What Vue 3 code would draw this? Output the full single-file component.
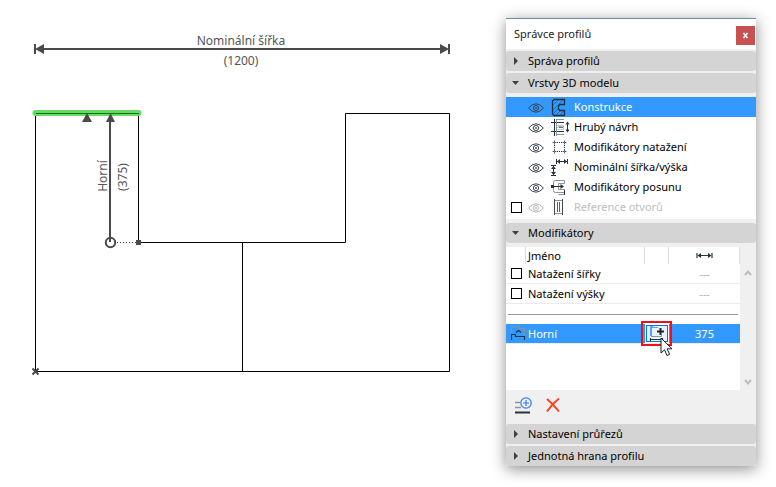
<script setup>
import { ref } from 'vue'

const dark = '#26333b'
const gray = '#8b9299'

const layers = ref([
  {
    name: 'Konstrukce', visible: true, selected: true,
    icon: [
      { d: 'M4 2.5H14.5V7.5H10L8.5 9V12L10 13.5H14.5V18.5H4L2.5 17V4Z', stroke: '#20303e', w: 1.3 },
      { d: 'M3 8L8 3M3 13L13 3M3 17L8.5 11.5M6 18L10 14M10 18L14 14', stroke: '#23527f', w: 0.7 }
    ]
  },
  {
    name: 'Hrubý návrh', visible: true,
    icon: [
      { d: 'M1 5.5H14M1 14.5H14M4.5 2V19', stroke: dark, w: 1 },
      { d: 'M6.5 2V19M7 2.5H14M7 17.5H14', stroke: gray, w: 1 },
      { d: 'M7.5 8.5H13.5V12.5H7.5', stroke: '#c3c8cc', w: 1 },
      { d: 'M8 10.5L9 9.5L10 11L11 9.5L12 11L13 9.5', stroke: dark, w: 0.8 },
      { d: 'M17.5 6V14', stroke: dark, w: 1 },
      { d: 'M15.5 7.5L17.5 4.5L19.5 7.5ZM15.5 12.5L17.5 15.5L19.5 12.5Z', fill: dark }
    ]
  },
  {
    name: 'Modifikátory natažení', visible: true,
    icon: [
      { d: 'M7 5.5H13M7 14.5H13M4.500 8V13M14.500 8V13', stroke: dark, w: 1, dash: '1 1' },
      { d: 'M2.500 5.500H6.500M4.500 3.500V7.500M12.500 5.500H16.500M14.500 3.500V7.500M2.500 14.500H6.500M4.500 12.500V16.500M12.500 14.500H16.500M14.500 12.500V16.500', stroke: '#59646b', w: 1 }
    ]
  },
  {
    name: 'Nominální šířka/výška', visible: true,
    icon: [
      { d: 'M6.5 2V7M17.5 2V7M7 4.5H17M1 8.5H6M1 18.5H6M3.5 9V18', stroke: dark, w: 1 },
      { d: 'M7 4.5L10 2V7ZM17 4.5L14 2V7ZM3.5 9L1 12H6ZM3.5 18L1 15H6Z', fill: dark }
    ]
  },
  {
    name: 'Modifikátory posunu', visible: true,
    icon: [
      { d: 'M14.5 6.500V3.500H5.500Q3.500 3.500 3.500 5.500V13.500Q3.500 15.500 5.500 15.500H14.500M14.500 6.500H8.500V12.500H14.500V17.500H8.500', stroke: gray, w: 1 },
      { d: 'M2 9.5H13M14.500 13V18', stroke: dark, w: 1 },
      { d: 'M1 8H4V11H1ZM10.500 7L14 9.5L10.500 12Z', fill: dark }
    ]
  },
  {
    name: 'Reference otvorů', visible: false,
    icon: [
      { d: 'M4.5 2V18M12.5 2V18', stroke: '#444c52', w: 1 },
      { d: 'M5 3.5H12M5 16.500H12', stroke: gray, w: 1 },
      { d: 'M7.500 5V15M9.500 5V15', stroke: '#59646b', w: 1 }
    ]
  }
])

const stretch = ref([
  { id: 'stretch-w', name: 'Natažení šířky', on: false },
  { id: 'stretch-h', name: 'Natažení výšky', on: false }
])
</script>

<template>
  <main class="page">
    <svg class="drawing" viewBox="0 0 506 487" role="img" aria-label="Profil">
      <path class="outline" d="M35.5 113.5H138.5V242.5H345.5V113.5H449.5V371.5H35.5ZM242.5 242.5V371.5" />
      <line class="mark" x1="35.500" x2="138.500" y1="113" y2="113" />
      <path class="edge" d="M36 113.5H139" />
      <g class="dim">
        <path d="M35 44V54M449 44V54M40 49H444M110 118V242" />
        <circle cx="110.5" cy="242.5" r="4.7" />
        <path class="dots" d="M117 242.5H136" />
        <path class="cross" d="M32.5 368.5L38.5 374.5M38.5 368.5L32.5 374.5" />
      </g>
      <path class="solid" d="M35 49L44 44V54ZM449 49L440 44V54ZM110.500 113L115 122H106ZM87 113L92 122H82ZM136 240H141V245H136Z" />
      <g class="caption">
        <text x="241" y="45">Nominální šířka</text>
        <text x="241" y="65">(1200)</text>
        <text transform="translate(107 176) rotate(-90)">Horní</text>
        <text transform="translate(127 177) rotate(-90)">(375)</text>
      </g>
    </svg>

    <aside class="panel">
      <header class="title">
        <h1>Správce profilů</h1>
        <button class="close" type="button" aria-label="Zavřít">
          <svg viewBox="0 0 7 7" width="7" height="7"><path d="M1.500 1L5.500 6M5.500 1L1.500 6" stroke="#fff" stroke-width="1.600" /></svg>
        </button>
      </header>

      <button class="bar" type="button" aria-expanded="false"><i class="arrow"></i>Správa profilů</button>
      <button class="bar" type="button" aria-expanded="true"><i class="arrow open"></i>Vrstvy 3D modelu</button>

      <ul class="layers">
        <li v-for="l in layers" :key="l.name" :class="{ selected: l.selected, off: !l.visible }">
          <span class="slot"><input v-if="!l.visible" type="checkbox" :aria-label="l.name" /></span>
          <button class="eye" type="button" :aria-label="l.name" :aria-pressed="l.visible" @click="l.visible = !l.visible">
            <svg viewBox="0 0 16 10" width="16" height="10">
              <path d="M.6 5Q4 .8 8 .8T15.400 5Q12 9.200 8 9.200T.6 5Z" />
              <circle cx="8" cy="5" r="2.600" /><circle cx="8" cy="5" r=".6" />
            </svg>
          </button>
          <svg class="glyph" viewBox="0 0 20 20" width="20" height="20">
            <path
              v-for="(p, i) in l.icon" :key="i" :d="p.d" :fill="p.fill || 'none'"
              :stroke="p.stroke" :stroke-width="p.w" :stroke-dasharray="p.dash"
            />
          </svg>
          <span class="name">{{ l.name }}</span>
        </li>
      </ul>

      <button class="bar" type="button" aria-expanded="true"><i class="arrow open"></i>Modifikátory</button>

      <div class="modifiers">
        <table>
          <colgroup><col class="c-check" /><col /><col class="c-tool" /><col class="c-value" /></colgroup>
          <thead>
            <tr>
              <th></th>
              <th>Jméno</th>
              <th></th>
              <th class="value" aria-label="Hodnota">
                <svg viewBox="0 0 17 7" width="17" height="7">
                  <path d="M1 1V6M16 1V6M2 3.500H15" stroke="#26333b" stroke-width="1.200" />
                  <path d="M1.500 3.500L5 1V6ZM15.500 3.500L12 1V6Z" fill="#26333b" />
                </svg>
              </th>
            </tr>
          </thead>
          <tbody>
            <tr v-for="m in stretch" :key="m.id">
              <td class="lead"><input :id="m.id" v-model="m.on" type="checkbox" /></td>
              <td><label :for="m.id">{{ m.name }}</label></td>
              <td></td>
              <td class="value none">---</td>
            </tr>
            <tr class="divider"><td colspan="4"><hr /></td></tr>
            <tr class="selected">
              <td class="lead">
                <svg viewBox="0 0 15 15" width="15" height="15" fill="none">
                  <path d="M.5 7V.500H7.500V2.500H13.500V9" stroke="#8b9299" />
                  <path d="M.5 14V8.500H4.500V10.500H13.500V14" stroke="#26333b" stroke-width="1.200" />
                  <path d="M5 6.500L7.500 4.500L10 6.500" stroke="#26333b" stroke-width="1.200" />
                </svg>
              </td>
              <td>Horní</td>
              <td class="tool">
                <button type="button" aria-label="Přidat">
                  <svg viewBox="0 0 18 15" width="18" height="15" fill="none">
                    <path d="M5 1.500H10M13.500 9V10.500H3" stroke="#8b9299" />
                    <path d="M5 1H3V10" stroke="#3b86ff" stroke-width="1.600" />
                    <path d="M12.500 2V9M9 5.500H16" stroke="#1c252b" stroke-width="2" />
                    <path d="M2 13.500H15M2.500 12V15M14.500 12V15" stroke="#26333b" stroke-width="1.200" />
                  </svg>
                </button>
                <span class="highlight"></span>
                <svg class="cursor" viewBox="0 0 13 20" width="13" height="20">
                  <path d="M1 1V16L4.500 12.800L7 18.500L9.600 17.300L7.100 11.800H12Z" fill="#fff" stroke="#1b1b2b" />
                </svg>
              </td>
              <td class="value">375</td>
            </tr>
          </tbody>
        </table>
        <div class="scroll">
          <button type="button" aria-label="Nahoru"><svg viewBox="0 0 8 8" width="8" height="8"><path d="M1 6L4 2.500L7 6" /></svg></button>
          <button type="button" aria-label="Dolů"><svg viewBox="0 0 8 8" width="8" height="8"><path d="M1 2L4 5.500L7 2" /></svg></button>
        </div>
      </div>

      <div class="tools">
        <button type="button" aria-label="Nový">
          <svg viewBox="0 0 18 17" width="18" height="17" fill="none">
            <path d="M1 5.500H6M1 10.500H7" stroke="#8b9299" stroke-width="1.600" />
            <path d="M1 15.500H16" stroke="#26333b" stroke-width="2" />
            <circle cx="12" cy="6" r="5.200" stroke="#2f7bff" stroke-width="1.200" />
            <path d="M12 3V9M9 6H15" stroke="#2f7bff" stroke-width="1.200" />
          </svg>
        </button>
        <button type="button" aria-label="Smazat">
          <svg viewBox="0 0 14 16" width="14" height="16"><path d="M1 2Q7 7 13 14.500M13 1.500Q6 7 1 14.500" fill="none" stroke="#ff401c" stroke-width="2" /></svg>
        </button>
      </div>

      <button class="bar" type="button" aria-expanded="false"><i class="arrow"></i>Nastavení průřezů</button>
      <button class="bar" type="button" aria-expanded="false"><i class="arrow"></i>Jednotná hrana profilu</button>
    </aside>
  </main>
</template>

<style>
body {
  background: #fff;
}
</style>

<style scoped>
.page {
  display: flex;
  align-items: flex-start;
  padding-right: 20px;
  font-family: "Noto Sans", "Open Sans", sans-serif;
  font-size: 11px;
  line-height: 16px;
  color: #000;
}

.page * {
  box-sizing: border-box;
}

button {
  padding: 0;
  border: 0;
  background: none;
  font: inherit;
  color: inherit;
}

svg {
  display: block;
  flex: none;
}

.drawing {
  flex: 1 1 0;
  min-width: 0;
}

.mark {
  stroke: #68d968;
  stroke-width: 6;
  stroke-linecap: round;
}

.outline {
  fill: none;
  stroke: #000;
}

.edge {
  stroke: #087808;
}

.dim {
  fill: none;
  stroke: #4a4a4a;
  stroke-width: 2;
}

.dim .dots {
  stroke-width: 1;
  stroke-dasharray: 1 2;
}

.solid {
  fill: #4a4a4a;
}

.caption {
  font-size: 12px;
  text-anchor: middle;
  fill: #555;
}

.panel {
  flex: none;
  width: 250px;
  margin-top: 18px;
  background: #f0f0f0;
  box-shadow: 0 3px 14px rgba(0, 0, 0, 0.45);
}

.title {
  display: flex;
  align-items: flex-start;
  justify-content: space-between;
  height: 31px;
  margin-bottom: 2px;
  padding: 7px 1px 0 8px;
  border-top: 1px solid #6c8fb0;
  background: #fff;
}

h1 {
  margin: 0;
  font-size: 11px;
  font-weight: 400;
  color: #222;
}

.close {
  display: grid;
  place-items: center;
  width: 19px;
  height: 19px;
  background: #c75050;
}

.bar {
  display: flex;
  align-items: center;
  width: 100%;
  height: 20px;
  margin-bottom: 2px;
  padding-left: 8px;
  border-radius: 3px;
  background: #d4d4d4;
}

.bar:last-child {
  margin-bottom: 0;
}

.arrow {
  width: 14px;
  height: 8px;
}

.arrow::before {
  content: "";
  display: block;
  width: 4px;
  height: 8px;
  background: #404040;
  clip-path: polygon(0 0, 100% 50%, 0 100%);
}

.arrow.open::before {
  width: 7px;
  height: 4px;
  margin-top: 2px;
  margin-left: -2px;
  clip-path: polygon(0 0, 100% 0, 50% 100%);
}

.layers {
  margin: 4px 0;
  padding: 0 0 2px;
  list-style: none;
  background: #fff;
}

.layers li {
  display: flex;
  align-items: center;
  height: 20px;
  padding-left: 5px;
}

.layers .selected,
tr.selected {
  background: #3399ff;
  color: #fff;
}

.slot {
  width: 11px;
  margin-right: 6px;
}

input {
  display: block;
  appearance: none;
  width: 11px;
  height: 11px;
  margin: 0;
  border: 1px solid #000;
  background: #fff;
}

input:checked {
  box-shadow: inset 0 0 0 2px #fff;
  background: #000;
}

.eye {
  margin-right: 6px;
  padding-top: 2px;
}

.eye svg {
  fill: none;
  stroke: #3b464e;
}

.off .eye svg {
  stroke: #b8b8b8;
}

.glyph {
  margin-right: 4px;
}

.off .name {
  color: #bdbdbd;
}

.modifiers {
  display: flex;
  height: 143px;
  margin-top: 4px;
  background: linear-gradient(to left, #f0f0f0 16px, #fff 16px);
}

table {
  flex: 1;
  align-self: flex-start;
  table-layout: fixed;
  border-collapse: separate;
  border-spacing: 0;
}

.c-check {
  width: 20px;
}

.c-tool {
  width: 24px;
}

.c-value {
  width: 71px;
}

th,
td {
  height: 20px;
  padding: 0 0 0 2px;
  text-align: left;
  font-weight: 400;
  border-bottom: 1px solid #ebebeb;
}

th {
  height: 17px;
  border-right: 1px solid #dedede;
  border-bottom: 0;
}

td.lead {
  padding-left: 5px;
}

th.value,
td.value {
  padding: 0;
  text-align: center;
}

.value svg {
  margin: 0 auto;
}

.none {
  color: #b0b0b0;
}

.divider td {
  padding: 0 2px;
  border: 0;
}

hr {
  height: 1px;
  margin: 0;
  border: 0;
  background: #999;
}

td.tool {
  position: relative;
  padding: 0;
}

.tool button {
  display: grid;
  place-items: center;
  width: 24px;
  height: 19px;
  border: 1px solid #fff;
  background: #e8f2fb;
  box-shadow: inset 0 0 0 1px #0078d7;
}

.highlight {
  position: absolute;
  inset: -3px -3px -3px -4px;
  border: 2px solid #f0101c;
}

.cursor {
  position: absolute;
  top: 13px;
  left: 15px;
}

.scroll {
  display: flex;
  flex-direction: column;
  justify-content: space-between;
  align-items: center;
  width: 16px;
  padding: 22px 0 4px;
}

.scroll path {
  fill: none;
  stroke: #bdbdbd;
  stroke-width: 2;
}

.tools {
  display: flex;
  align-items: center;
  gap: 14px;
  height: 34px;
  padding: 0 0 4px 8px;
}
</style>
